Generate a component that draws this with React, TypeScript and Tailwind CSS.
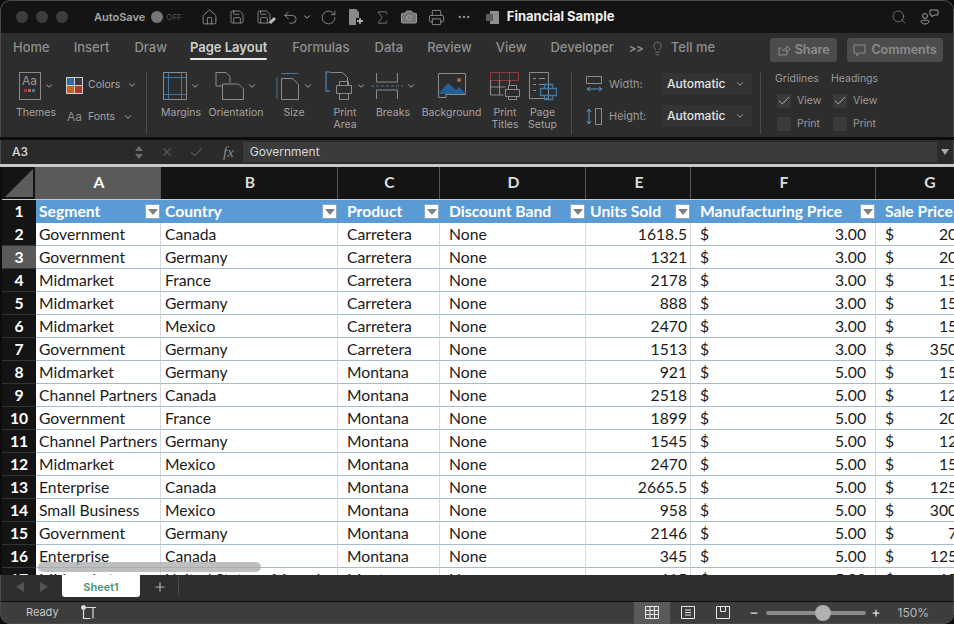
import type { ReactNode } from 'react';
import {
  Camera,
  Check,
  ChevronDown,
  Ellipsis,
  House,
  Lightbulb,
  Minus,
  Plus,
  Printer,
  RotateCw,
  Save,
  Search,
  Sigma,
  Undo2,
  X,
} from 'lucide-react';

const line = '#8c8c8c';
const blue = '#3f78ab';

const tabs = [
  ['Home', 'ml-[12px]'],
  ['Insert', 'ml-[24px]'],
  ['Draw', 'ml-[25px]'],
  ['Page Layout', 'ml-[23px]'],
  ['Formulas', 'ml-[25px]'],
  ['Data', 'ml-[25px]'],
  ['Review', 'ml-[24px]'],
  ['View', 'ml-[24px]'],
  ['Developer', 'ml-[24px]'],
];

const rows = [
  ['Government', 'Canada', 'Carretera', '1618.5', '3.00', '20.00'],
  ['Government', 'Germany', 'Carretera', '1321', '3.00', '20.00'],
  ['Midmarket', 'France', 'Carretera', '2178', '3.00', '15.00'],
  ['Midmarket', 'Germany', 'Carretera', '888', '3.00', '15.00'],
  ['Midmarket', 'Mexico', 'Carretera', '2470', '3.00', '15.00'],
  ['Government', 'Germany', 'Carretera', '1513', '3.00', '350.00'],
  ['Midmarket', 'Germany', 'Montana', '921', '5.00', '15.00'],
  ['Channel Partners', 'Canada', 'Montana', '2518', '5.00', '12.00'],
  ['Government', 'France', 'Montana', '1899', '5.00', '20.00'],
  ['Channel Partners', 'Germany', 'Montana', '1545', '5.00', '12.00'],
  ['Midmarket', 'Mexico', 'Montana', '2470', '5.00', '15.00'],
  ['Enterprise', 'Canada', 'Montana', '2665.5', '5.00', '125.00'],
  ['Small Business', 'Mexico', 'Montana', '958', '5.00', '300.00'],
  ['Government', 'Germany', 'Montana', '2146', '5.00', '7.00'],
  ['Enterprise', 'Canada', 'Montana', '345', '5.00', '125.00'],
  ['Midmarket', 'United States of America', 'Montana', '615', '5.00', '15.00'],
];

const headers = [
  ['Segment', 'pl-[3px]'],
  ['Country', 'pl-[4px]'],
  ['Product', 'pl-[9px]'],
  ['Discount Band', 'pl-[9px]'],
  ['Units Sold', 'pl-[4px]'],
  ['Manufacturing Price', 'pl-[9px]'],
  ['Sale Price', 'pl-[9px]'],
];

const gridCols =
  'grid grid-cols-[34px_125px_177px_102px_146px_105px_185px_107px] w-[981px] ml-[2px]';

function Chev({ className = '' }: { className?: string }) {
  return <ChevronDown size={10} strokeWidth={2.4} className={`text-[#a8a8a8] ${className}`} />;
}

function RibbonBtn({
  w,
  icon,
  label,
  chev = true,
}: {
  w: string;
  icon: ReactNode;
  label: ReactNode;
  chev?: boolean;
}) {
  return (
    <div className={`mt-[4px] flex flex-col items-center ${w}`}>
      <div className="flex h-[30px] items-center gap-[3px]">
        {icon}
        {chev && <Chev />}
      </div>
      <div className="mt-[6px] text-center text-[10.5px] leading-[12px] text-[#a4a4a4]">{label}</div>
    </div>
  );
}

function Sep({ className = '' }: { className?: string }) {
  return <div className={`mt-[5px] h-[62px] w-px bg-[#4c4c4c] ${className}`} />;
}

function Svg({ w, h, children }: { w: number; h: number; children: ReactNode }) {
  return (
    <svg width={w} height={h} viewBox={`0 0 ${w} ${h}`} fill="none" stroke={line} strokeWidth="1">
      {children}
    </svg>
  );
}

function SheetBox({ checked }: { checked?: boolean }) {
  return (
    <span className="flex h-[14px] w-[14px] items-center justify-center bg-[#3a3a3a]">
      {checked && <Check size={14} strokeWidth={1.6} className="text-[#b5b5b5]" />}
    </span>
  );
}

function Filter() {
  return (
    <span className="flex h-[15px] w-[15px] shrink-0 items-center justify-center border border-[#8aa9c6] bg-white">
      <span className="h-0 w-0 border-x-[5px] border-t-[6px] border-x-transparent border-t-[#808080]" />
    </span>
  );
}

function HeaderCell({ text, className = '' }: { text: string; className?: string }) {
  return (
    <div className={`flex items-center justify-between pr-[1px] text-[15.7px] font-bold text-white ${className}`}>
      <span className="whitespace-nowrap">{text}</span>
      <Filter />
    </div>
  );
}

export default function App() {
  const cell =
    'flex h-[23px] items-center border-b border-r border-b-[#a3bccf] border-r-[#d9d9d9] bg-white pt-[1px] text-[15.7px] text-[#1a1a1a] whitespace-nowrap overflow-hidden';
  return (
    <div className="relative h-[624px] w-[954px] overflow-hidden bg-[#0c0c0c] font-['Inter',sans-serif]">
      {/* title bar */}
      <div className="flex h-[33px] items-center rounded-t-[10px] border-l border-r border-t border-[#4a4a4a] bg-[#141414] text-[#9a9a9a]">
        <span className="ml-[15px] h-[12px] w-[12px] rounded-full bg-[#3c3c3c]" />
        <span className="ml-[8px] h-[12px] w-[12px] rounded-full bg-[#3c3c3c]" />
        <span className="ml-[8px] h-[12px] w-[12px] rounded-full bg-[#3c3c3c]" />
        <span className="ml-[26px] text-[11px] font-semibold text-[#a6a6a6]">AutoSave</span>
        <span className="ml-[6px] h-[12px] w-[12px] rounded-full bg-[#777]" />
        <span className="ml-[3px] text-[8px] text-[#555]">OFF</span>
        <House size={17} strokeWidth={1.2} className="ml-[19px]" />
        <Save size={16} strokeWidth={1.2} className="ml-[11px]" />
        <span className="relative ml-[11px]">
          <Save size={16} strokeWidth={1.2} />
          <span className="absolute bottom-[1px] right-[-2px] h-[7px] w-[3px] rotate-45 bg-[#bdbdbd]" />
        </span>
        <Undo2 size={17} strokeWidth={1.2} className="ml-[10px]" />
        <Chev className="ml-[3px]" />
        <RotateCw size={17} strokeWidth={1.1} className="ml-[8px]" />
        <svg width="16" height="18" viewBox="0 0 16 18" className="ml-[11px]">
          <path d="M1 1h7l3 3v6H8v7H1z" fill="#8a8a8a" />
          <path d="M12 10v6M9 13h6" stroke="#cfcfcf" strokeWidth="1.4" />
        </svg>
        <Sigma size={17} strokeWidth={1} className="ml-[10px]" />
        <Camera size={18} strokeWidth={1.4} fill="#777" className="ml-[9px]" />
        <Printer size={17} strokeWidth={1.2} className="ml-[10px]" />
        <Ellipsis size={14} className="ml-[12px]" />
        <svg width="15" height="15" viewBox="0 0 15 15" className="ml-[14px]">
          <path d="M5 1h9v13H5z" fill="#8e8e8e" />
          <path d="M1 4h7v7H1z" fill="#5d5d5d" />
        </svg>
        <span className="ml-[7px] text-[13px] font-bold text-[#f0f0f0]">Financial Sample</span>
        <Search size={16} strokeWidth={1} className="ml-[277px]" />
        <svg width="20" height="18" viewBox="0 0 20 18" fill="none" stroke="#9a9a9a" className="ml-[13px]">
          <circle cx="5" cy="8" r="2.5" />
          <path d="M1 13c0-1 8-1 8 0 0 2-2 3-4 3s-4-1-4-3z" />
          <path d="M10 2h8v5h-4l-2 2V7h-2z" />
        </svg>
      </div>

      {/* tabs */}
      <div className="flex h-[29px] items-center border-x border-[#4a4a4a] bg-[#2d2d2d] pt-[1px] text-[13px] font-medium text-[#8f8f8f]">
        {tabs.map(([t, m]) => (
          <div
            key={t}
            className={`relative flex h-[26px] items-center whitespace-nowrap ${m} ${t === 'Page Layout' ? 'font-semibold text-[#cfcfcf]' : ''}`}
          >
            {t}
            {t === 'Page Layout' && <span className="absolute bottom-[1px] left-0 h-[2px] w-full rounded bg-[#e8e8e8]" />}
          </div>
        ))}
        <span className="ml-[15px] text-[11px] font-bold">&gt;&gt;</span>
        <Lightbulb size={15} strokeWidth={1} className="ml-[6px]" />
        <span className="ml-[6px] whitespace-nowrap">Tell me</span>
        <div className="ml-[55px] mt-[4px] flex h-[24px] w-[67px] items-center justify-center gap-[5px] rounded-[3px] bg-[#4c4c4c] text-[12.5px] font-semibold text-[#8c8c8c]">
          <svg width="12" height="12" viewBox="0 0 12 12" fill="none" stroke="#8c8c8c">
            <path d="M9 7v4H1V4h3M5 7c0-2 2-3 4-3V2l3 3-3 3V6c-2 0-3 0-4 1z" />
          </svg>
          Share
        </div>
        <div className="ml-[10px] mt-[4px] flex h-[24px] w-[96px] items-center justify-center gap-[5px] rounded-[3px] bg-[#4c4c4c] text-[12.5px] font-semibold text-[#8c8c8c]">
          <svg width="13" height="13" viewBox="0 0 13 13" fill="none" stroke="#8c8c8c">
            <path d="M1 1h11v8H6l-2 3V9H1z" />
          </svg>
          Comments
        </div>
      </div>

      {/* ribbon */}
      <div className="flex h-[75px] border-x border-[#4a4a4a] bg-[#2d2d2d] pt-[5px]">
        <div className="ml-[13px] w-[44px]">
          <RibbonBtn
            w="w-[44px]"
            icon={
              <div className="flex h-[28px] w-[22px] flex-col items-center border border-[#8a8a8a] text-[12px] leading-[15px] text-[#9a9a9a]">
                Aa
                <div className="mt-[1px] flex gap-[1px]">
                  <span className="h-[3px] w-[3px] bg-[#a33]" />
                  <span className="h-[3px] w-[3px] bg-[#a66]" />
                  <span className="h-[3px] w-[3px] bg-[#579]" />
                </div>
              </div>
            }
            label="Themes"
          />
        </div>
        <div className="ml-[8px] w-[78px] text-[10.5px] text-[#a4a4a4]">
          <div className="mt-[8px] flex h-[20px] items-center">
            <svg width="17" height="17" viewBox="0 0 17 17">
              <path d="M0 0h17v17H0z" fill="#cfcfcf" />
              <path d="M1 1h7v7H1z" fill="#2f6ea8" />
              <path d="M9 1h7v7H9z" fill="#3a3a3a" />
              <path d="M1 9h7v7H1z" fill="#c9641f" />
              <path d="M9 9h7v7H9z" fill="#b8352d" />
            </svg>
            <span className="ml-[5px]">Colors</span>
            <Chev className="ml-[7px]" />
          </div>
          <div className="mt-[12px] flex h-[20px] items-center">
            <span className="ml-[1px] w-[16px] text-[12px] text-[#8d8d8d]">Aa</span>
            <span className="ml-[5px]">Fonts</span>
            <Chev className="ml-[8px]" />
          </div>
        </div>
        <Sep className="ml-[2px]" />
        <div className="ml-[9px] flex">
          <RibbonBtn
            w="w-[50px]"
            label="Margins"
            icon={
              <Svg w={24} h={28}>
                <path d="M.5.5h23v27H.5z" />
                <path d="M5.5.5v27M18.5.5v27M.5 5.5h23M.5 22.5h23" stroke={blue} />
              </Svg>
            }
          />
          <RibbonBtn
            w="w-[60px]"
            label="Orientation"
            icon={
              <Svg w={29} h={28}>
                <path d="M7 14H1V.5h10l4 4V11" />
                <path d="M7.5 12h16l5 5v10.5h-21z" />
              </Svg>
            }
          />
          <RibbonBtn
            w="w-[56px]"
            label="Size"
            icon={
              <Svg w={24} h={28}>
                <path d="M5 1.5h17M1 5v22" stroke={blue} />
                <path d="M5.5 6.5h11l6 6v15h-17z" />
              </Svg>
            }
          />
          <RibbonBtn
            w="w-[46px]"
            label={
              <>
                Print
                <br />
                Area
              </>
            }
            icon={
              <Svg w={28} h={30}>
                <path d="M5 20H1V1h4" stroke={blue} strokeWidth="1.5" />
                <path d="M5.5 1.5h12l5 5V14" />
                <path d="M11.5 14.5h15v8h-15zM14.5 14.5v-4h9v4M14.5 22.5v6h9v-6" />
              </Svg>
            }
          />
          <RibbonBtn
            w="w-[50px]"
            label="Breaks"
            icon={
              <Svg w={32} h={28}>
                <path d="M5.500 1v9h21V1M5.500 27v-9h21v9" />
                <path d="M0 14h32" stroke={blue} strokeDasharray="3 2" />
              </Svg>
            }
          />
          <RibbonBtn
            w="w-[67px]"
            chev={false}
            label="Background"
            icon={
              <svg width="28" height="26" viewBox="0 0 28 26" fill="none" stroke={line}>
                <path d="M.5.500h27v21H8v3H.5z" />
                <path d="M0 21l10-11 8 7 3-3 7 7H0z" fill="#235f99" stroke="none" />
                <circle cx="21" cy="7" r="2" fill="#a8733a" stroke="none" />
              </svg>
            }
          />
          <RibbonBtn
            w="w-[40px]"
            chev={false}
            label={
              <>
                Print
                <br />
                Titles
              </>
            }
            icon={
              <svg width="30" height="28" viewBox="0 0 30 28" fill="none" stroke={line}>
                <path d="M.5.500h28v8H.5zM9.500.5v8M19.500.500v8" stroke="#8f3a37" />
                <path d="M.5 8v15h13M9.500 8v15M19.500 8v6M.5 15h15" />
                <path d="M15.500 17.500h14v7h-14zM18.500 17.500v-4h8v4M18.500 24.500v3h8v-3" />
              </svg>
            }
          />
          <RibbonBtn
            w="w-[35px]"
            chev={false}
            label={
              <>
                Page
                <br />
                Setup
              </>
            }
            icon={
              <svg width="28" height="29" viewBox="0 0 28 29" fill="none" stroke={line}>
                <path d="M.5.500h19v26H.5zM4 6.500h3M10 6.500h6M4 12.500h3M10 12.500h6M4 18.500h3" />
                <path d="M11.500 16.500h16v7h-16zM15.500 16.500v-4h8v4M15.500 23.500v4h8v-4" stroke={blue} strokeWidth="1.300" />
              </svg>
            }
          />
        </div>
        <Sep className="ml-[11px]" />
        <div className="ml-[14px] w-[168px] text-[11px] text-[#9a9a9a]">
          <div className="mt-[6px] flex h-[22px] items-center">
            <svg width="17" height="17" viewBox="0 0 17 17" fill="none" stroke={line}>
              <path d="M.5.5h15v7H.5z" />
              <path d="M1 13h15M1 13l3-2M1 13l3 2M16 13l-3-2M16 13l-3 2" stroke="#5a96cc" />
            </svg>
            <span className="ml-[6px] w-[54px]">Width:</span>
            <div className="flex h-[22px] w-[89px] items-center justify-between bg-[#333] pl-[4px] pr-[7px] text-[12px] font-medium text-[#e4e4e4]">
              Automatic
              <Chev />
            </div>
          </div>
          <div className="mt-[10px] flex h-[22px] items-center">
            <svg width="17" height="17" viewBox="0 0 17 17" fill="none" stroke={line}>
              <path d="M9.500.5h6v16h-6z" />
              <path d="M3 1v15M3 1L1 4M3 1l2 3M3 16l-2-3M3 16l2-3" stroke="#5a96cc" />
            </svg>
            <span className="ml-[6px] w-[54px]">Height:</span>
            <div className="flex h-[22px] w-[89px] items-center justify-between bg-[#333] pl-[4px] pr-[7px] text-[12px] font-medium text-[#e4e4e4]">
              Automatic
              <Chev />
            </div>
          </div>
        </div>
        <Sep className="ml-[6px]" />
        <div className="ml-[14px] flex text-[10.5px] text-[#9a9a9a]">
          {['Gridlines', 'Headings'].map((title) => (
            <div key={title} className="w-[56px]">
              <div className="mt-[5px] leading-[14px]">{title}</div>
              <div className="ml-[2px] mt-[7px] flex items-center gap-[6px]">
                <SheetBox checked />
                View
              </div>
              <div className="ml-[2px] mt-[7px] flex items-center gap-[6px]">
                <SheetBox />
                Print
              </div>
            </div>
          ))}
        </div>
      </div>

      {/* formula bar */}
      <div className="mt-[3px] flex h-[24px] items-center border-x border-[#4a4a4a] bg-[#2a2a2a] text-[12px] text-[#d8d8d8]">
        <span className="ml-[11px] w-[120px] font-medium">A3</span>
        <div className="ml-[3px] flex flex-col gap-[3px]">
          <span className="h-0 w-0 border-x-[4px] border-b-[5px] border-x-transparent border-b-[#6a6a6a]" />
          <span className="h-0 w-0 border-x-[4px] border-t-[5px] border-x-transparent border-t-[#6a6a6a]" />
        </div>
        <X size={14} strokeWidth={2} className="ml-[17px] text-[#555]" />
        <Check size={15} strokeWidth={2} className="ml-[15px] text-[#555]" />
        <span className="ml-[19px] font-['Liberation_Serif',serif] text-[15px] italic text-[#8a8a8a]">fx</span>
        <div className="ml-[9px] flex h-[20px] w-[694px] items-center bg-[#3b3b3b] pl-[7px]">Government</div>
        <span className="ml-[4px] h-0 w-0 border-x-[4px] border-t-[6px] border-x-transparent border-t-[#a8a8a8]" />
      </div>

      {/* sheet */}
      <div className="h-[411px] overflow-hidden border-t-[3px] border-[#c9c9c9] bg-[#0c0c0c] font-['Lato',sans-serif]">
        <div className={`${gridCols} h-[32px] text-[15.7px] font-bold text-[#dcdcdc]`}>
          <div className="relative border-r border-[#555] bg-[#141414]">
            <span className="absolute bottom-[2px] right-[2px] h-0 w-0 border-b-[28px] border-l-[28px] border-b-[#5c5c5c] border-l-transparent" />
          </div>
          {['A', 'B', 'C', 'D', 'E', 'F', 'G'].map((c) => (
            <div
              key={c}
              className={`flex items-center justify-center border-r border-[#555] pl-[2px] ${c === 'A' ? 'bg-[#5a5a5a] text-white' : 'bg-[#141414]'}`}
            >
              {c}
            </div>
          ))}
        </div>
        <div className={`${gridCols} h-[24px] border-t border-[#c9c9c9]`}>
          <div className="flex items-center justify-center bg-[#141414] text-[15.7px] font-bold text-white">1</div>
          {headers.map(([h, pad]) => (
            <div key={h} className={`bg-[#5b9bd5] ${pad}`}>
              <HeaderCell text={h} className="h-full" />
            </div>
          ))}
        </div>
        {rows.map((r, i) => {
          const n = i + 2;
          return (
            <div key={n} className={gridCols}>
              <div
                className={`flex h-[23px] items-center justify-center border-b border-[#333] pt-[1px] text-[15.7px] font-bold text-white ${n === 3 ? 'bg-[#5a5a5a]' : 'bg-[#141414]'}`}
              >
                {n}
              </div>
              <div className={`${cell} pl-[3px]`}>{r[0]}</div>
              <div className={`${cell} pl-[4px]`}>{r[1]}</div>
              <div className={`${cell} pl-[9px]`}>{r[2]}</div>
              <div className={`${cell} pl-[9px]`}>None</div>
              <div className={`${cell} justify-end pr-[3px]`}>{r[3]}</div>
              <div className={`${cell} justify-between pl-[9px] pr-[9px]`}>
                <span>$</span>
                <span>{r[4]}</span>
              </div>
              <div className={`${cell} justify-between pl-[9px] pr-[3px]`}>
                <span>$</span>
                <span>{r[5]}</span>
              </div>
            </div>
          );
        })}
      </div>
      <div className="absolute left-[38px] top-[562px] h-[10px] w-[223px] rounded-full bg-[#a8a8a8]/75" />

      {/* sheet tabs */}
      <div className="flex h-[26px] items-start border-x border-[#4a4a4a] bg-[#2e2e2e]">
        <span className="ml-[15px] mt-[7px] h-0 w-0 border-y-[5px] border-r-[8px] border-y-transparent border-r-[#555]" />
        <span className="ml-[16px] mt-[7px] h-0 w-0 border-y-[5px] border-l-[8px] border-y-transparent border-l-[#555]" />
        <div className="ml-[14px] flex h-[22px] w-[78px] items-center justify-center rounded-b-[3px] bg-white pt-[2px] text-[11px] font-semibold text-[#4a9274]">
          Sheet1
        </div>
        <Plus size={14} strokeWidth={2} className="ml-[13px] mt-[5px] text-[#b0b0b0]" />
        <div className="ml-[11px] mt-[2px] h-[18px] w-px bg-[#4c4c4c]" />
      </div>

      {/* status bar */}
      <div className="flex h-[23px] items-center rounded-b-[10px] border border-[#4a4a4a] border-t-[#0c0c0c] bg-[#3d3d3d] text-[11px] text-[#c8c8c8]">
        <span className="ml-[25px]">Ready</span>
        <svg width="16" height="15" viewBox="0 0 16 15" fill="none" stroke="#dcdcdc" className="ml-[22px]">
          <circle cx="2.500" cy="2.500" r="2" fill="#dcdcdc" />
          <path d="M5 2.500h10M12 2.500v11M2.500 5v8.500h7" strokeWidth="1.200" />
        </svg>
        <div className="ml-[537px] flex h-[22px] w-[36px] items-center justify-center bg-[#5a5a5a]">
          <svg width="14" height="13" viewBox="0 0 14 13" fill="none" stroke="#e8e8e8">
            <path d="M.5.500h13v12H.5zM.5 4.500h13M.5 8.500h13M5 .5v12M9.500.5v12" />
          </svg>
        </div>
        <svg width="14" height="13" viewBox="0 0 14 13" fill="none" stroke="#e8e8e8" className="ml-[11px]">
          <path d="M.5.500h13v12H.5zM4 4h6M4 6.500h6M4 9h6" />
        </svg>
        <svg width="14" height="13" viewBox="0 0 14 13" fill="none" stroke="#e8e8e8" className="ml-[21px]">
          <path d="M.5.500h13v12H.5zM4.500.5v5h5v-5" />
        </svg>
        <Minus size={10} strokeWidth={3} className="ml-[19px] text-[#e8e8e8]" />
        <div className="relative ml-[7px] h-[4px] w-[100px] rounded-full bg-[#8a8a8a]">
          <span className="absolute left-[49px] top-[-6px] h-[16px] w-[16px] rounded-full bg-[#b0b0b0]" />
        </div>
        <Plus size={10} strokeWidth={3} className="ml-[5px] text-[#e8e8e8]" />
        <span className="ml-[17px] text-[12px] text-[#b8b8b8]">150%</span>
      </div>
    </div>
  );
}
